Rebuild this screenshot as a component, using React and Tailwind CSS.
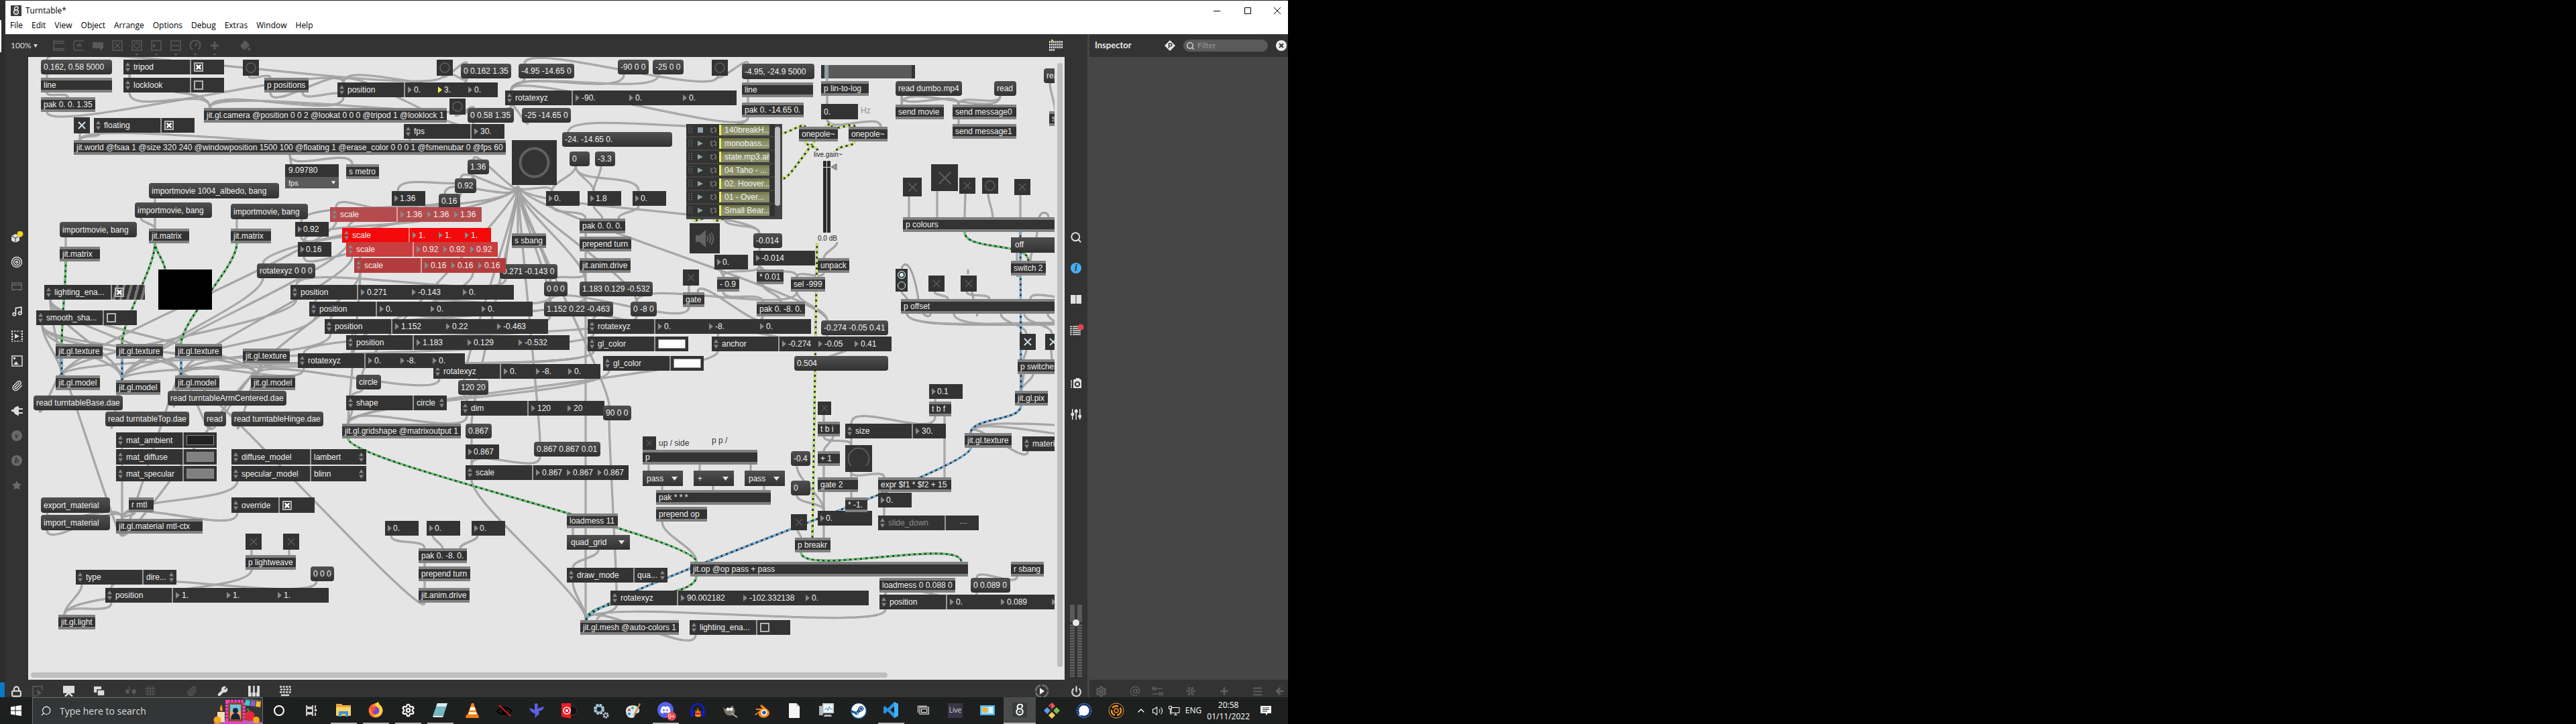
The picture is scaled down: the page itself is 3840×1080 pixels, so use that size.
import React from "react";
import {
  Music, Paperclip, Search, Star, Target, Wrench, Settings, Power,
  Lock, Snowflake, AtSign, Plus, Menu, ArrowLeft, ChevronUp, Volume2, PaintBucket,
} from "lucide-react";
import { FaDiscord, FaSteam } from "react-icons/fa";

const OX = 42;
const OY = 85;
const at = (x, y, w, h) => ({ left: x - OX, top: y - OY, width: w, height: h });

/* ---------- patch cords: [x1, y1, x2, y2] ---------- */
const gray = [
  [70, 111, 70, 116], [70, 138, 101, 145], [70, 167, 512, 123], [193, 111, 193, 116], [193, 111, 313, 161], [193, 138, 313, 161],
  [371, 113, 403, 116], [403, 138, 512, 123], [451, 138, 512, 145], [512, 145, 313, 161], [660, 113, 696, 95],
  [679, 171, 706, 161], [696, 117, 512, 123], [706, 183, 512, 123], [119, 199, 119, 209], [149, 198, 119, 209],
  [611, 207, 119, 209], [432, 231, 434, 245], [432, 231, 525, 245], [231, 296, 231, 341], [210, 325, 231, 341],
  [353, 327, 353, 341], [98, 354, 98, 368], [660, 113, 70, 89], [696, 117, 660, 108],
  [772, 277, 706, 238], [772, 277, 687, 266], [772, 277, 663, 289], [772, 277, 772, 348], [772, 277, 754, 394],
  [772, 277, 820, 420], [772, 277, 820, 450], [772, 277, 873, 420], [772, 277, 949, 450], [772, 277, 1132, 348],
  [772, 277, 692, 567], [772, 277, 703, 632], [772, 277, 805, 659], [772, 277, 908, 605], [772, 277, 540, 559],
  [772, 277, 1233, 478], [772, 277, 392, 393], [772, 277, 823, 285], [772, 277, 519, 340],
  [706, 260, 593, 285], [687, 288, 449, 331], [663, 311, 453, 361], [593, 307, 501, 309], [449, 353, 525, 361], [453, 383, 537, 385],
  [75, 447, 92, 560], [75, 447, 182, 567], [75, 447, 270, 560], [75, 447, 383, 560],
  [63, 485, 92, 560], [63, 485, 182, 567], [63, 485, 270, 560], [63, 485, 383, 560],
  [501, 331, 92, 560], [519, 362, 182, 567], [525, 383, 270, 560], [537, 407, 383, 560],
  [442, 447, 92, 560], [470, 472, 182, 567], [493, 498, 270, 560], [525, 522, 383, 560],
  [453, 549, 270, 560], [655, 565, 383, 560], [392, 415, 182, 567], [885, 498, 92, 560], [885, 524, 182, 567], [885, 524, 270, 560],
  [754, 416, 442, 425], [820, 442, 470, 450], [820, 472, 493, 476], [873, 442, 525, 500], [873, 407, 820, 420], [949, 472, 885, 476],
  [949, 472, 453, 527], [59, 612, 92, 560], [166, 636, 182, 567], [259, 605, 270, 560], [313, 636, 383, 560], [354, 636, 383, 560],
  [313, 636, 270, 560], [182, 668, 182, 774], [354, 717, 182, 774], [354, 765, 182, 774], [201, 764, 182, 774], [70, 764, 182, 774],
  [70, 790, 182, 774], [182, 796, 92, 560], [182, 796, 270, 560], [182, 796, 383, 560], [633, 899, 270, 560],
  [537, 407, 519, 632], [705, 407, 525, 522], [540, 581, 525, 590], [525, 612, 519, 632], [692, 589, 696, 598], [696, 620, 519, 632],
  [908, 553, 519, 632], [1070, 524, 519, 632], [703, 654, 703, 663], [703, 685, 703, 694], [703, 716, 874, 925], [805, 681, 703, 694],
  [873, 407, 873, 925], [908, 627, 919, 881], [919, 903, 890, 925], [858, 248, 823, 285], [858, 248, 885, 285], [858, 248, 952, 285],
  [896, 248, 885, 285], [823, 307, 873, 326], [885, 307, 898, 326], [952, 307, 922, 326], [873, 348, 873, 353], [873, 375, 873, 385],
  [930, 111, 762, 135], [982, 111, 762, 135], [782, 117, 762, 135], [787, 183, 762, 157], [1070, 113, 1115, 95], [1070, 113, 782, 95],
  [1115, 117, 1115, 123], [1115, 145, 1115, 153], [1115, 175, 847, 197], [1115, 175, 762, 135], [762, 157, 313, 161],
  [1233, 117, 1233, 121], [1233, 143, 1233, 155], [1233, 178, 1240, 189], [1233, 178, 1313, 189],
  [1344, 143, 1344, 156], [1344, 143, 1429, 156], [1491, 143, 1344, 156], [1491, 143, 1429, 156], [1429, 178, 1429, 185],
  [1565, 124, 1573, 166], [1132, 370, 1132, 374], [1132, 396, 1137, 402], [1248, 361, 1228, 385], [1228, 407, 1188, 413],
  [1132, 396, 1188, 413], [1132, 396, 1078, 413], [1074, 402, 1078, 413], [1080, 326, 1132, 348], [1027, 426, 1027, 436], [1027, 458, 820, 450],
  [1137, 424, 1164, 450], [1078, 435, 1137, 450], [1188, 435, 949, 450], [1137, 472, 1133, 480], [1188, 435, 1233, 478],
  [1137, 472, 1040, 436], [1233, 500, 1070, 502], [1193, 531, 1316, 520],
  [1355, 293, 1355, 324], [1397, 285, 1397, 324], [1439, 289, 1438, 324], [1473, 289, 1480, 324], [1521, 291, 1521, 324],
  [1546, 346, 1536, 389], [1516, 377, 1516, 389], [1516, 411, 1530, 408], [1344, 435, 1352, 446], [1393, 435, 1413, 446], [1441, 435, 1475, 446],
  [1600, 438, 1536, 446], [1352, 468, 1700, 500], [1422, 468, 1700, 500], [1352, 468, 1700, 496], [1492, 468, 1530, 498], [1527, 468, 1568, 498],
  [1562, 468, 1600, 498], [1530, 522, 1526, 536], [1567, 522, 1568, 536], [1526, 558, 1522, 583], [1540, 558, 1522, 583], [1522, 558, 1522, 583],
  [1700, 622, 1447, 646], [1700, 648, 1447, 646], [1532, 673, 1447, 646], [1228, 619, 1228, 629], [1228, 651, 1269, 664], [1242, 651, 1228, 673],
  [1228, 695, 1228, 712], [1269, 704, 1269, 712], [1269, 654, 1269, 664], [1394, 595, 1394, 599],
  [1394, 621, 1269, 632], [1408, 621, 1408, 712], [1228, 734, 1228, 802], [1269, 734, 1269, 742], [1318, 757, 1318, 769],
  [1269, 704, 1318, 712], [1188, 695, 1228, 762], [1188, 739, 1228, 762], [1189, 791, 1194, 802], [1516, 860, 1456, 862], [1456, 884, 1320, 887],
  [1320, 884, 1320, 887], [1320, 909, 874, 925], [987, 778, 1038, 838], [967, 693, 967, 702], [1043, 693, 1043, 702], [1119, 693, 1119, 702],
  [987, 725, 987, 731], [1063, 725, 1063, 731], [1139, 725, 1139, 731], [854, 788, 854, 798], [892, 820, 854, 847], [854, 869, 874, 925],
  [1037, 947, 874, 925], [583, 799, 633, 818], [645, 799, 660, 818], [712, 799, 686, 818], [633, 840, 633, 845], [633, 867, 633, 877],
  [375, 820, 375, 828], [431, 820, 431, 828], [375, 850, 96, 917], [472, 867, 166, 877], [122, 872, 96, 917], [166, 899, 96, 917],
];
const green = [
  [98, 390, 92, 513], [231, 363, 182, 513], [231, 363, 246, 402], [353, 363, 270, 513], [1438, 346, 1533, 389],
  [519, 654, 1038, 838], [1194, 824, 1433, 838], [1038, 860, 874, 925],
];
const blue = [
  [92, 535, 92, 560], [182, 535, 182, 567], [270, 535, 270, 560], [1521, 346, 1522, 583], [1522, 605, 1447, 646], [1447, 668, 874, 925],
];
const signal = [
  [1166, 196, 1200, 189], [1166, 262, 1240, 189], [1245, 188, 1274, 189], [1200, 211, 1219, 225], [1274, 211, 1247, 225],
  [1033, 327, 1057, 327], [1064, 327, 1096, 324], [1218, 362, 1211, 802],
];
const cord = ([a, b, c, d]) => {
  const k = Math.min(36, Math.max(3, Math.hypot(c - a, d - b) * 0.28));
  return `M${a},${b}C${a},${b + k} ${c},${d - k} ${c},${d}`;
};

function Cords() {
  const dashed = [[green, "#62cf70"], [blue, "#6fb4ec"], [signal, "#cdf06e"]];
  return (
    <svg className="absolute inset-0 h-full w-full" fill="none" aria-hidden="true">
      <g transform={`translate(${-OX} ${-OY})`}>
        {gray.map((c, i) => (
          <g key={i}>
            <path d={cord(c)} stroke="#929292" strokeWidth="3" />
            <path d={cord(c)} stroke="#b3b3b3" strokeWidth="1.4" />
          </g>
        ))}
        <path d="M1344,401C1348,388 1360,390 1369,446M1549,324C1552,315 1562,315 1563,324M1387,468C1387,474 1380,472 1376,468M1443,409L1443,402M1449,435L1451,446M1457,468L1456,472" stroke="#a0a0a0" strokeWidth="3" />
        {dashed.map(([list, color]) =>
          list.map((c, i) => (
            <g key={color + i}>
              <path d={cord(c)} stroke="#2f3a30" strokeWidth="3" />
              <path d={cord(c)} stroke={color} strokeWidth="3" strokeDasharray="5 3" />
            </g>
          ))
        )}
      </g>
    </svg>
  );
}

/* ---------- patcher boxes ---------- */
const portFill = { h: "#f0937f", c: "#7fd4e8", o: "#d6d84a" };
function Port({ side, dx, kind }) {
  const top = side === "in";
  return (
    <svg width="8" height="4" viewBox="0 0 8 4" className={top ? "absolute top-0" : "absolute bottom-0"} style={{ left: dx - 4 }} aria-hidden="true">
      {kind === "x" ? (
        <path d={top ? "M0 0h8C8 3 6 4 4 4S0 3 0 0z" : "M0 4h8C8 1 6 0 4 0S0 1 0 4z"} fill="#c8c8c8" />
      ) : (
        <path d={top ? "M1 0C1 2.500 2.500 3.300 4 3.300S7 2.500 7 0" : "M1 4C1 1.500 2.500 .7 4 .7S7 1.500 7 4"} fill="#2a2a2a" stroke={portFill[kind]} />
      )}
    </svg>
  );
}
const port = (s) => ({ kind: s[0], dx: Number(s.slice(1)) });

function Obj({ d: [x, y, w, text, ins = "h9", outs = "o9"] }) {
  return (
    <div className="absolute overflow-hidden border-y-4 border-[#808080] bg-[#333] pl-1 text-xs leading-[14px] whitespace-nowrap" style={at(x, y, w, 22)}>
      {text}
      <div className="absolute inset-x-0 -top-1 h-1">
        {ins.split(" ").filter(Boolean).map((s) => <Port key={s} side="in" {...port(s)} />)}
      </div>
      <div className="absolute inset-x-0 -bottom-1 h-1">
        {outs.split(" ").filter(Boolean).map((s) => <Port key={s} side="out" {...port(s)} />)}
      </div>
    </div>
  );
}
const Msg = ({ d: [x, y, w, text, h = 22] }) => (
  <button className="absolute overflow-hidden rounded-[4px] bg-linear-to-b from-[#505050] to-[#323232] pl-1 text-left text-xs whitespace-nowrap" style={at(x, y, w, h)}>{text}</button>
);
const Tri = ({ color = "#8a8a8a" }) => (
  <svg width="6" height="12" viewBox="0 0 6 12" className="shrink-0" aria-hidden="true"><path d="M0 1L6 6L0 11z" fill={color} /></svg>
);
const UpDown = () => (
  <svg width="7" height="14" viewBox="0 0 7 14" className="shrink-0" aria-hidden="true"><path d="M0 5.500L3.500 0L7 5.500zM0 8.500L3.500 14L7 8.500z" fill="#868686" /></svg>
);
const Num = ({ d: [x, y, w, v] }) => (
  <label className="absolute flex items-center gap-0.5 bg-[#333] pl-1" style={at(x, y, w, 22)}>
    <Tri />
    <input aria-label="number" defaultValue={v} className="w-full min-w-0 bg-transparent text-xs outline-none" />
  </label>
);
function Cross({ size, color, w = 2 }) {
  return (
    <svg width={size} height={size} viewBox="0 0 12 12" aria-hidden="true" className="pointer-events-none col-start-1 row-start-1">
      <path d="M1 1L11 11M11 1L1 11" stroke={color} strokeWidth={w} />
    </svg>
  );
}
const Toggle = ({ d: [x, y, s, on] }) => (
  <label className="absolute grid place-items-center bg-[#333]" style={at(x, y, s, s)}>
    <input type="checkbox" aria-label="toggle" defaultChecked={!!on} className="col-start-1 row-start-1 h-full w-full appearance-none" />
    <Cross size={Math.round(s * 0.52)} color={on ? "#cfe9ee" : "#5c5c5c"} w={on ? 1.8 : 1.4} />
  </label>
);
const Bang = ({ d: [x, y, s, r, sw] }) => (
  <button aria-label="bang" className="absolute bg-[#333]" style={at(x, y, s, s)}>
    <svg width={s} height={s} viewBox={`0 0 ${s} ${s}`}><circle cx={s / 2} cy={s / 2} r={r} fill="none" stroke="#606060" strokeWidth={sw} /></svg>
  </button>
);
const CheckBox = ({ on, label }) => (
  <span className="grid place-items-center">
    <input type="checkbox" aria-label={label} defaultChecked={on} className="col-start-1 row-start-1 h-3.5 w-3.5 appearance-none border-2 border-[#b4b4b4]" />
    {on && <Cross size={8} color="#fff" w={4} />}
  </span>
);
function Attr({ x, y, w = 150, h = 22, label, div = 99, bg = "#333", nums, step, yellow, check, color, menu, stripes, dim }) {
  return (
    <div className="absolute flex overflow-hidden text-xs whitespace-nowrap" style={{ ...at(x, y, w, h), background: bg }}>
      <div className="flex shrink-0 items-center gap-[5px] pl-[3px]" style={{ width: div }}>
        <UpDown />
        <span className={dim ? "text-[#8c8c8c]" : ""}>{label}</span>
      </div>
      <div className="w-0.5 shrink-0 bg-white/50" />
      {nums && nums.map((n, i) => (
        <label key={i} className="flex shrink-0 items-center gap-[3px] pl-1" style={{ width: step }}>
          <Tri color={yellow === i ? "#f2ee4c" : "#8a8a8a"} />
          <input aria-label={`${label} ${i + 1}`} defaultValue={n} className="w-full min-w-0 bg-transparent outline-none" />
        </label>
      ))}
      {check !== undefined && (
        <div className={stripes ? "flex flex-1 items-center bg-[repeating-linear-gradient(105deg,#333_0px,#333_6px,#777_6px,#777_10px)] pl-1" : "flex flex-1 items-center pl-1"}>
          <CheckBox on={check} label={label} />
        </div>
      )}
      {color && <button aria-label={`${label} colour`} className="m-1 w-[42px] border border-[#8c8c8c]" style={{ background: color }} />}
      {menu && (
        <label className="flex flex-1 items-center pr-1 pl-1">
          <select aria-label={label} className="w-full min-w-0 appearance-none bg-transparent outline-none"><option>{menu}</option></select>
          <UpDown />
        </label>
      )}
      {dim && <span className="flex-1 self-center pl-5 text-[#8c8c8c]">---</span>}
    </div>
  );
}
const UMenu = ({ d: [x, y, w, v, h = 23] }) => (
  <label className="absolute flex items-center bg-linear-to-b from-[#505050] to-[#323232] px-1.5" style={at(x, y, w, h)}>
    <select aria-label="menu" className="w-full min-w-0 appearance-none bg-transparent text-xs outline-none"><option>{v}</option></select>
    <svg width="9" height="6" className="mr-0.5 shrink-0" aria-hidden="true"><path d="M0 0h9L4.500 6z" fill="#e5e5e5" /></svg>
  </label>
);

const messages = [
  [61, 89, 106, "0.162, 0.58 5000"], [222, 273, 194, "importmovie 1004_albedo, bang", 23], [201, 302, 115, "importmovie, bang", 23],
  [344, 304, 115, "importmovie, bang", 23], [89, 331, 115, "importmovie, bang", 23], [687, 95, 75, "0 0.162 1.35"],
  [773, 95, 83, "-4.95 -14.65 0"], [697, 161, 69, "0 0.58 1.35"], [778, 161, 73, "-25 -14.65 0"], [697, 238, 32, "1.36"],
  [678, 266, 32, "0.92"], [654, 289, 32, "0.16"], [745, 394, 86, "0.271 -0.143 0"], [383, 393, 87, "rotatexyz 0 0 0"],
  [921, 89, 46, "-90 0 0"], [973, 89, 46, "-25 0 0"], [1106, 95, 108, "-4.95, -24.9 5000", 23], [838, 197, 164, "-24. -14.65 0."],
  [849, 226, 30, "0"], [887, 226, 30, "-3.3"], [1123, 348, 43, "-0.014"], [1335, 121, 99, "read dumbo.mp4"], [1482, 121, 33, "read"],
  [1556, 102, 33, "read"], [50, 590, 133, "read turntableBase.dae"], [250, 583, 177, "read turntableArmCentered.dae"],
  [157, 614, 125, "read turntableTop.dae"], [304, 614, 33, "read"], [345, 614, 137, "read turntableHinge.dae"], [531, 559, 37, "circle"],
  [694, 632, 39, "0.867"], [796, 659, 99, "0.867 0.867 0.01"], [811, 420, 35, "0 0 0"],
  [864, 420, 109, "1.183 0.129 -0.532"], [811, 450, 103, "1.152 0.22 -0.463"], [940, 450, 39, "0 -8 0"], [1224, 478, 100, "-0.274 -0.05 0.41"],
  [1184, 531, 140, "0.504"], [1179, 673, 29, "-0.4"], [1179, 717, 29, "0"], [61, 742, 103, "export_material", 23],
  [61, 768, 103, "import_material", 23], [463, 845, 35, "0 0 0"], [1447, 862, 59, "0 0.089 0"],
];
const objects = [
  [61, 116, 106, "line", "h9 x53 x96", "o9 x96"], [61, 145, 81, "pak 0. 0. 1.35", "x9 h40 x71"], [394, 116, 66, "p positions", "h9", "o9 o57"],
  [304, 161, 362, "jit.gl.camera @position 0 0 2 @lookat 0 0 0 @tripod 1 @looklock 1", "c9", "x9 x352"],
  [110, 209, 644, "jit.world @fsaa 1 @size 320 240 @windowposition 1500 100 @floating 1 @erase_color 0 0 0 1 @fsmenubar 0 @fps 60", "h9", "x9 o322 x634"],
  [222, 341, 60, "jit.matrix", "h9", "o9 x50"], [344, 341, 60, "jit.matrix", "h9", "o9 x50"], [89, 368, 60, "jit.matrix", "h9", "o9 x50"],
  [516, 245, 49, "s metro", "h9", ""], [763, 348, 51, "s sbang", "h9", ""], [1106, 123, 106, "line", "h9 x53 x96", "o9 x96"],
  [1106, 153, 92, "pak 0. -14.65 0.", "h9 x46 x82"], [864, 326, 68, "pak 0. 0. 0.", "h9 h34 h58"], [864, 353, 77, "prepend turn"],
  [864, 385, 76, "jit.anim.drive", "h9", "o9 x66"], [1128, 402, 40, "* 0.01", "h9 c31"], [1224, 121, 71, "p lin-to-log"],
  [1191, 189, 58, "onepole~", "h9 h48"], [1265, 189, 58, "onepole~", "h9 h48"], [1335, 156, 72, "send movie", "h9", ""],
  [1420, 156, 95, "send message0", "h9", ""], [1420, 185, 95, "send message1", "h9", ""], [1564, 166, 40, "s", "h9", ""],
  [1346, 324, 240, "p colours", "h9 h51 h92 h134 h175 h217", "x9 o92 o175"], [1507, 389, 52, "switch 2", "c9 h26 x42"],
  [1219, 385, 47, "unpack", "h9", "o9 x37"], [83, 513, 70, "jit.gl.texture", "h9", "o9 x60"], [173, 513, 70, "jit.gl.texture", "h9", "o9 x60"],
  [261, 513, 70, "jit.gl.texture", "h9", "o9 x60"], [362, 520, 70, "jit.gl.texture", "x9", "o9 x60"], [83, 560, 66, "jit.gl.model", "c9", "x9 x56"],
  [173, 567, 66, "jit.gl.model", "c9", "x9 x56"], [261, 560, 66, "jit.gl.model", "c9", "x9 x56"], [374, 560, 66, "jit.gl.model", "c9", "x9 x56"],
  [510, 632, 177, "jit.gl.gridshape @matrixoutput 1", "c9", "o9 x167"], [1018, 436, 32, "gate", "c9 h22"], [1069, 413, 33, "- 0.9", "h9 c23"],
  [1179, 413, 51, "sel -999", "h9 x41", "o9 x41"], [1128, 450, 72, "pak 0. -8. 0.", "h9 x36 x62"], [958, 671, 171, "p", "h9", "o9 o85 o161"],
  [1343, 446, 260, "p offset", "h9 h70 h132 h193", "o9 o44 o79 o114 o149 o184 o219"], [1517, 536, 90, "p switches", "h9 h51"],
  [1513, 583, 49, "jit.gl.pix", "h9", "o9 x39"], [1385, 599, 33, "t b f", "h9", "o9 o23"], [1219, 629, 33, "t b i", "h9", "o9 o23"],
  [1219, 673, 33, "+ 1", "h9 x23"], [1438, 646, 70, "jit.gl.texture", "h9", "o9 x60"], [192, 742, 37, "r mtl", "", "o9"],
  [173, 774, 129, "jit.gl.material mtl-ctx", "c9 x25 x41 x56 x72 x88 x103 x119", "o9 x119"], [366, 828, 75, "p lightweave", "h9 h65"],
  [87, 917, 55, "jit.gl.light", "c9", "x9"], [624, 818, 72, "pak 0. -8. 0.", "h9 h36 h62"], [624, 845, 77, "prepend turn"],
  [624, 877, 76, "jit.anim.drive", "h9", "o9 x66"], [845, 766, 76, "loadmess 11", "x9"],
  [865, 925, 147, "jit.gl.mesh @auto-colors 1", "c9 c25 x41 x57 x73 x89 x105 x121 x137", "x9 x137"], [978, 731, 171, "pak * * *", "h9 h85 h161"],
  [978, 756, 76, "prepend op"], [1029, 838, 414, "jit.op @op pass + pass", "h9 c404", "o9 x404"], [1219, 712, 60, "gate 2", "c9 h50", "o9 o50"],
  [1185, 802, 53, "p breakr", "h9 h26 h43"], [1309, 712, 109, "expr $f1 * $f2 + 15", "h9 c99"],
  [1507, 838, 49, "r sbang", "", "o9"], [1311, 862, 113, "loadmess 0 0.088 0", "x9"],
];
const numbers = [
  [440, 331, 50, "0.92"], [584, 285, 50, "1.36"], [444, 361, 50, "0.16"], [814, 285, 50, "0."], [876, 285, 50, "1.8"], [943, 285, 50, "0."],
  [1065, 380, 50, "0."], [1123, 374, 92, "-0.014"], [694, 663, 50, "0.867"], [1385, 573, 50, "0.1"], [574, 777, 50, "0."], [636, 777, 50, "0."],
  [703, 777, 50, "0."], [1219, 762, 81, "0."], [1309, 735, 50, "0."],
];
const toggles = [
  [110, 175, 24, 1], [1018, 402, 24], [1346, 265, 28], [1388, 245, 40], [1430, 265, 24], [1512, 267, 24], [958, 651, 20], [1384, 411, 24],
  [1432, 411, 24], [1520, 498, 24, 1], [1558, 498, 24, 1], [1219, 599, 20], [366, 796, 24], [422, 796, 24], [1179, 767, 24],
];
const bangs = [
  [362, 89, 24, 7, 1.5], [651, 89, 24, 7, 1.5], [670, 147, 24, 7, 1.5], [1061, 89, 24, 7, 1.5], [1464, 265, 24, 7, 1.5], [763, 209, 67, 21, 4],
];
const zeros = ["0.", "0.", "0."];
const attrs = [
  { x: 184, y: 89, label: "tripod", check: true }, { x: 184, y: 116, label: "locklook", check: false },
  { x: 140, y: 176, label: "floating", check: true }, { x: 503, y: 123, w: 239, label: "position", nums: ["0.", "3.", "0."], step: 45, yellow: 1 },
  { x: 753, y: 135, w: 345, label: "rotatexyz", nums: ["-90.", "0.", "0."], step: 80 }, { x: 602, y: 185, label: "fps", nums: ["30."], step: 45 },
  { x: 492, y: 309, w: 226, label: "scale", nums: ["1.36", "1.36", "1.36"], step: 40, bg: "#b44c4d" },
  { x: 510, y: 340, w: 222, label: "scale", nums: ["1.", "1.", "1."], step: 39, bg: "#f40a0a" },
  { x: 516, y: 361, w: 226, label: "scale", nums: ["0.92", "0.92", "0.92"], step: 40, bg: "#c83d3d" },
  { x: 528, y: 385, w: 226, label: "scale", nums: ["0.16", "0.16", "0.16"], step: 40, bg: "#b23d3d" },
  { x: 66, y: 425, label: "lighting_ena...", check: true, stripes: true }, { x: 54, y: 463, label: "smooth_sha...", check: false },
  { x: 173, y: 645, h: 23, label: "mat_ambient", color: "#222" }, { x: 173, y: 670, h: 23, label: "mat_diffuse", color: "#808080" },
  { x: 173, y: 695, h: 23, label: "mat_specular", color: "#808080" },
  { x: 345, y: 670, w: 201, h: 23, label: "diffuse_model", div: 117, menu: "lambert" },
  { x: 345, y: 695, w: 201, h: 23, label: "specular_model", div: 117, menu: "blinn" },
  { x: 433, y: 425, w: 333, label: "position", nums: ["0.271", "-0.143", "0."], step: 76 }, { x: 461, y: 450, w: 333, label: "position", nums: zeros, step: 76 },
  { x: 484, y: 476, w: 333, label: "position", nums: ["1.152", "0.22", "-0.463"], step: 76 },
  { x: 516, y: 500, w: 333, label: "position", nums: ["1.183", "0.129", "-0.532"], step: 76 },
  { x: 646, y: 543, w: 249, label: "rotatexyz", nums: ["0.", "-8.", "0."], step: 48 },
  { x: 444, y: 527, w: 249, label: "rotatexyz", nums: ["0.", "-8.", "0."], step: 48 },
  { x: 516, y: 590, label: "shape", menu: "circle" }, { x: 687, y: 598, w: 214, label: "dim", nums: ["120", "20"], step: 54 },
  { x: 694, y: 694, w: 243, label: "scale", nums: ["0.867", "0.867", "0.867"], step: 46 },
  { x: 876, y: 476, w: 333, label: "rotatexyz", nums: ["0.", "-8.", "0."], step: 76 }, { x: 876, y: 502, label: "gl_color", color: "#fff" },
  { x: 899, y: 531, label: "gl_color", color: "#fff" }, { x: 1061, y: 502, w: 268, label: "anchor", nums: ["-0.274", "-0.05", "0.41"], step: 54 },
  { x: 1260, y: 632, label: "size", nums: ["30."], step: 45 }, { x: 1524, y: 651, label: "material", check: false },
  { x: 345, y: 742, w: 124, h: 23, label: "override", div: 70, check: true }, { x: 113, y: 850, label: "type", menu: "dire..." },
  { x: 157, y: 877, w: 333, label: "position", nums: ["1.", "1.", "1."], step: 76 }, { x: 845, y: 847, label: "draw_mode", menu: "qua..." },
  { x: 910, y: 881, w: 385, label: "rotatexyz", nums: ["90.002182", "-102.332138", "0."], step: 93 },
  { x: 1028, y: 925, label: "lighting_ena...", check: false }, { x: 1309, y: 769, label: "slide_down", dim: true },
  { x: 1311, y: 887, w: 333, label: "position", nums: ["0.", "0.089", "0."], step: 76 },
];
const menus = [[958, 702, 60, "pass"], [1034, 702, 60, "+"], [1110, 702, 60, "pass"], [845, 798, 94, "quad_grid", 22]];
const clips = ["140breakH...", "monobass....", "state.mp3.aif", "04 Taho - ...", "02. Hoover...", "01 - Over...", "Small Bear..."];

function Playlist() {
  return (
    <div className="absolute flex bg-[#444]" style={at(1023, 185, 143, 142)}>
      <ul className="flex flex-1 flex-col gap-0.5 overflow-hidden">
        {clips.map((c, i) => (
          <li key={c} className="flex h-[18px] shrink-0 items-center bg-[#333] pl-[3px]">
            <svg width="6" height="12" className="shrink-0" aria-hidden="true"><path d="M1 0v12M5 0v12" stroke="#6c6c6c" strokeWidth="1.5" strokeDasharray="1.5 1.5" /></svg>
            <button aria-label={i ? "play" : "stop"} className="ml-2 shrink-0">
              <svg width="9" height="10">{i ? <path d="M0 1L8 5L0 9z" fill="#8fa3a8" /> : <path d="M0 1h8v8H0z" fill="#8fa3a8" />}</svg>
            </button>
            <button aria-label="loop" className="ml-2.5 shrink-0">
              <svg width="9" height="10" fill="none" stroke="#808080" strokeWidth="1.5"><path d="M4 9A4 4 0 0 1 1.500 2.500M5 1A4 4 0 0 1 7.500 7.500" /><path d="M0 2h3v2M9 8H6V6" strokeWidth="1" /></svg>
            </button>
            <span className="ml-1 h-4 w-[75px] shrink-0 overflow-hidden border-l-[3px] border-[#f0ee55] bg-linear-to-b from-[#6f7346] to-[#8b9169] to-40% pl-[5px] text-xs leading-4 whitespace-nowrap">{c}</span>
          </li>
        ))}
      </ul>
      <div className="mt-1 mr-[3px] h-[118px] w-2 rounded bg-[#bebebe]" />
    </div>
  );
}

function Patcher() {
  return (
    <main className="relative min-w-0 flex-1 overflow-hidden bg-[#e5e5e5]">
      <div className="absolute inset-y-0 right-[15px] left-0 overflow-hidden text-[#f0f0f0]">
        <Cords />
        {toggles.map((d, i) => <Toggle key={i} d={d} />)}
        {bangs.map((d, i) => <Bang key={i} d={d} />)}
        {messages.map((d, i) => <Msg key={i} d={d} />)}
        {objects.map((d, i) => <Obj key={i} d={d} />)}
        {numbers.map((d, i) => <Num key={i} d={d} />)}
        {attrs.map((a, i) => <Attr key={i} {...a} />)}
        {menus.map((d, i) => <UMenu key={i} d={d} />)}
        <Msg d={[683, 567, 45, "120 20"]} />
        <Msg d={[899, 605, 42, "90 0 0"]} />
        <Obj d={[1260, 742, 33, "* -1.", "h9 x23", "x9"]} />

        <div className="absolute flex flex-col text-xs" style={at(425, 245, 80, 36)}>
          <output className="flex-1 bg-[#333] pl-[5px] leading-[18px]">9.09780</output>
          <label className="flex h-[17px] items-center bg-[#5a5a5a] px-[5px]">
            <select aria-label="unit" className="w-full appearance-none bg-transparent text-[11px] leading-[16px] outline-none"><option>fps</option></select>
            <svg width="6" height="5" className="shrink-0" aria-hidden="true"><path d="M0 0h6L3 5z" fill="#eee" /></svg>
          </label>
        </div>
        <div className="absolute bg-black" style={at(236, 402, 80, 60)} />
        <Playlist />
        <button aria-label="audio output" className="absolute grid place-items-center bg-[#333]" style={at(1028, 333, 45, 45)}>
          <svg width="28" height="26" viewBox="0 0 28 26"><path d="M0 8h6l9-8v26l-9-8H0z" fill="#636363" /><path d="M17 9q3 4 0 8M20 6q5 7 0 14M23 4q7 9 0 18" fill="none" stroke="#636363" strokeWidth="2" /></svg>
        </button>
        <div className="absolute flex bg-[#333] px-[5px]" style={at(1224, 97, 140, 20)}>
          <div className="w-1.5 bg-[#8d9da1]" /><div className="flex-1 bg-[#595959]" />
        </div>
        <input aria-label="cutoff" defaultValue="0." className="absolute bg-[#333] pl-1 text-xs outline-none" style={at(1224, 155, 55, 23)} />
        <span className="absolute text-xs leading-[22px] text-[#909090]" style={at(1283, 154, 20, 22)}>Hz</span>
        <span className="absolute text-[10px] leading-4 whitespace-nowrap text-[#222]" style={at(1213, 223, 50, 16)}>live.gain~</span>
        <svg className="absolute" style={at(1227, 240, 24, 107)} aria-hidden="true">
          <path d="M0 0h5v107H0zM6 0h5v107H6z" fill="#2a2a2a" /><path d="M0 9.500h12" stroke="#ddd" /><path d="M12 9L20 4.500V13.500z" fill="#999" stroke="#666" />
        </svg>
        <span className="absolute text-[10px] leading-4 whitespace-nowrap text-[#222]" style={at(1219, 348, 40, 16)}>0.0 dB</span>
        <div className="absolute bg-linear-to-b from-[#505050] to-[#323232] pl-1.5 text-xs leading-[23px]" style={at(1507, 354, 90, 23)}>off</div>
        <div className="absolute flex flex-col items-center justify-center gap-1 bg-[#333]" style={at(1335, 401, 18, 34)}>
          <input type="radio" name="mode" aria-label="mode 1" defaultChecked className="h-3 w-3 appearance-none rounded-full border border-[#cfe9ee] bg-[#cfe9ee] shadow-[inset_0_0_0_2px_#333]" />
          <input type="radio" name="mode" aria-label="mode 2" className="h-3 w-3 appearance-none rounded-full border border-[#cfe9ee]" />
        </div>
        <span className="absolute text-xs leading-[20px] whitespace-nowrap text-[#333]" style={at(982, 651, 60, 20)}>up / side</span>
        <span className="absolute text-xs leading-[20px] whitespace-nowrap text-[#333]" style={at(1061, 647, 60, 20)}>p p /</span>
        <button aria-label="dial" className="absolute bg-[#333]" style={at(1260, 664, 40, 40)}>
          <svg width="40" height="40" fill="none" stroke="#666" strokeWidth="1.5"><path d="M9 31A15.500 15.500 0 1 1 31 31" /></svg>
        </button>
      </div>
      <div className="absolute top-[9px] right-[3px] bottom-[19px] w-2 rounded bg-[#bebebe]" />
      <div className="absolute right-[264px] bottom-[3px] left-1 h-2 rounded bg-[#bebebe]" />
    </main>
  );
}

/* ---------- window chrome ---------- */
const ico = { fill: "none", stroke: "currentColor", strokeWidth: 1.5 };
const Drop = () => <path d="M5 20h6L8 23z" fill="currentColor" stroke="none" />;
const toolIcons = [
  ["object", <path d="M0 0v16M0 1.500h16M0 4.500h16M0 12.500h16M0 15h16" />],
  ["message", <><path d="M16 1H4Q1 1 1 4V12Q1 15 4 15H16" /><path d="M6 10l1-4M7 7q2-2 2 0l-.6 3M9 7q2-2 2.500 0l-.6 3" /></>],
  ["comment", <path d="M0 3h16v9h-2v4l-4-4H0z" fill="currentColor" stroke="none" />],
  ["toggle", <path d="M1 1h14v14H1zM4 4l8 8M12 4l-8 8" />],
  ["button", <><path d="M1 1h14v14H1z" /><circle cx="8" cy="8" r="4" /><Drop /></>],
  ["number", <><path d="M1 1h14v14H1z" /><path d="M3 5l5 3-5 3z" fill="currentColor" stroke="none" /><Drop /></>],
  ["slider", <><path d="M1 1h14v14H1zM3 8h10" /><Drop /></>],
  ["dial", <><path d="M4 14A7.500 7.500 0 1 1 12 14M8 9l3-5" strokeWidth="2" /><Drop /></>],
  ["add", <><path d="M8 2v12M2 8h12" strokeWidth="3" /><Drop /></>],
];
const menuItems = ["File", "Edit", "View", "Object", "Arrange", "Options", "Debug", "Extras", "Window", "Help"];
const MaxLogo = ({ s }) => (
  <svg width={s} height={s} viewBox="0 0 16 16" aria-hidden="true">
    <path d="M0 0h16v16H0z" fill="#3b3b3b" /><g fill="none" stroke="#f2f2f2" strokeWidth="1.6"><circle cx="8" cy="10" r="3.4" /><path d="M6 7Q4.500 2 8.500 2T10 6" /></g><circle cx="8" cy="10" r="1" fill="#8fdbe0" />
  </svg>
);

const Letter = ({ c }) => <span className="grid h-4 w-4 place-items-center rounded-full bg-[#6a6a6a] font-['Liberation_Serif',serif] text-[13px] leading-none font-bold text-[#333] italic">{c}</span>;
const sideLeft = [
  ["packages", <svg width="20" height="18" viewBox="0 0 20 18"><path d="M8 4l6 3v7l-6 3-6-3V7z" fill="#dcdcdc" /><path d="M2 7l6 3 6-3M8 10v7" stroke="#333" fill="none" /><circle cx="15" cy="4" r="4.5" fill="#f0cf1d" /></svg>],
  ["target", <Target size={18} strokeWidth={2} />],
  ["device", <svg width="16" height="13" className="text-[#6a6a6a]" {...ico}><path d="M1 1h14v10H1zM1 4h14M3 11v2M13 11v2" /></svg>],
  ["music", <Music size={17} strokeWidth={2.5} />],
  ["video", <svg width="17" height="17" {...ico}><path d="M1 0v17M16 0v17" strokeWidth="2.5" strokeDasharray="2.5 1.5" /><path d="M5 5l7 3.500L5 12z" fill="currentColor" stroke="none" /><path d="M4 1h9M4 16h9" strokeDasharray="2.5 1.5" /></svg>],
  ["image", <svg width="17" height="17" {...ico}><path d="M1 1h15v15H1z" /><path d="M3 14l4-5 4 5z" fill="currentColor" stroke="none" /><circle cx="4.5" cy="4.5" r="1" fill="currentColor" /></svg>],
  ["clip", <Paperclip size={17} strokeWidth={2} />],
  ["plugin", <svg width="17" height="17" fill="currentColor"><path d="M0 7h3Q5 2 11 2v3h6v2h-6v4h6v2h-6v3Q5 15 3 10H0z" /></svg>],
  ["vizzie", <Letter c="v" />], ["beap", <Letter c="b" />], ["favourites", <Star size={16} fill="#6a6a6a" stroke="none" />],
];
const sideRight = [
  ["search", <Search size={18} strokeWidth={2.5} />],
  ["inspector", <span className="grid h-4 w-4 place-items-center rounded-full bg-[#46aef0] font-['Liberation_Serif',serif] text-sm leading-none font-bold text-[#333] italic">i</span>],
  ["reference", <svg width="16" height="13" fill="currentColor"><path d="M0 0h7.500v13H0zM8.500 0H16v13H8.500z" /></svg>],
  ["console", <svg width="22" height="18" className="ml-1" stroke="currentColor" strokeWidth="1.5"><path d="M0 4h3M4 4h12M0 7h3M4 7h12M0 10h3M4 10h12M0 13h3M4 13h12M0 16h3M4 16h12" /><circle cx="16" cy="5" r="4.5" fill="#dd4452" stroke="none" /></svg>],
  ["", null],
  ["snapshots", <svg width="17" height="16" fill="currentColor"><path d="M4 2h3l1-2h5l1 2h2v13H4z" /><path d="M1 3v12" stroke="currentColor" strokeWidth="2" strokeDasharray="1.5 1" /><circle cx="10" cy="9" r="3.2" stroke="#333" strokeWidth="2" /></svg>],
  ["mixer", <svg width="16" height="16" fill="currentColor"><path d="M2 0h1.500v16H2zM7.500 0H9v16H7.500zM13 0h1.500v16H13z" /><circle cx="2.8" cy="8" r="2.5" /><circle cx="8.3" cy="3.5" r="2.5" /><circle cx="13.7" cy="11" r="2.5" /></svg>],
];
const IconButton = ({ label, className, children }) => <button aria-label={label} className={className}>{children}</button>;

function MaxWindow() {
  return (
    <section className="flex min-w-0 flex-1 flex-col bg-[#333]">
      <header className="flex h-[51px] shrink-0 flex-col border-t border-[#222] bg-white font-['Open_Sans',sans-serif] text-xs text-black">
        <div className="flex h-[29px] items-center gap-1.5 pl-2">
          <MaxLogo s={16} />
          <h1 className="flex-1">Turntable*</h1>
          <div className="flex h-full">
            <IconButton label="minimise" className="grid h-full w-9 place-items-center"><svg width="10" height="10" stroke="#000"><path d="M0 5.500h10" /></svg></IconButton>
            <IconButton label="maximise" className="grid h-full w-14 place-items-center"><svg width="10" height="10" stroke="#000" fill="none"><path d="M.5 .5h9v9h-9z" /></svg></IconButton>
            <IconButton label="close" className="grid h-full w-8 place-items-center"><svg width="10" height="10" stroke="#000"><path d="M0 0L10 10M10 0L0 10" /></svg></IconButton>
          </div>
        </div>
        <nav className="flex items-center gap-[13px] pl-[7px]">
          {menuItems.map((m) => <button key={m}>{m}</button>)}
        </nav>
      </header>
      <div className="flex min-h-0 flex-1">
        <div className="flex min-w-0 flex-1 flex-col">
          <div className="flex h-[34px] shrink-0 items-center">
            <select aria-label="zoom" className="ml-2 w-8 appearance-none font-['Lato',sans-serif] text-xs text-[#ddd]"><option>100%</option></select>
            <svg width="6" height="5" className="ml-0.5" aria-hidden="true"><path d="M0 0h6L3 5z" fill="#ddd" /></svg>
            <div className="ml-6 flex gap-[13px] text-[#595959]">
              {toolIcons.map(([n, g]) => <IconButton key={n} label={n}><svg width="16" height="16" overflow="visible" {...ico}>{g}</svg></IconButton>)}
            </div>
            <IconButton label="fill" className="ml-[30px] text-[#595959]"><PaintBucket size={16} fill="#595959" /></IconButton>
            <div className="flex-1" />
            <IconButton label="calendar" className="mr-[37px]">
              <svg width="20" height="18"><path d="M0 3.500h20M0 7.500h20M0 11.500h20M0 15.500h9" stroke="#ddd" strokeWidth="3" strokeDasharray="2 1" /><path d="M3 0h3v3H3z" fill="#e7d02c" /></svg>
            </IconButton>
          </div>
          <div className="flex min-h-0 flex-1">
            <nav className="flex w-[34px] shrink-0 flex-col items-center pt-[250px] text-[#dcdcdc]">
              {sideLeft.map(([n, g]) => <IconButton key={n} label={n} className="grid h-[37px] place-items-center">{g}</IconButton>)}
            </nav>
            <Patcher />
            <nav className="flex w-[34px] shrink-0 flex-col items-center pt-[246px] text-[#e2e2e2]">
              {sideRight.map(([n, g], i) => g ? <IconButton key={n} label={n} className="grid h-[46px] place-items-center">{g}</IconButton> : <div key={i} className="h-[34px]" />)}
              <div className="flex-1" />
              <svg width="18" height="109" className="mb-[3px]" aria-hidden="true">
                <path d="M3.500 0v26M14.500 0v26" stroke="#5a5a5a" strokeWidth="7" />
                <path d="M3.500 29v80M14.500 29v80" stroke="#5a5a5a" strokeWidth="7" strokeDasharray="3 1" />
                <circle cx="9" cy="27" r="5" fill="#e8e8e8" />
              </svg>
            </nav>
          </div>
          <footer className="flex h-[26px] shrink-0 items-center pt-2 text-[#dcdcdc]">
            <IconButton label="lock" className="w-[34px] pl-2"><Lock size={17} strokeWidth={3} /></IconButton>
            <IconButton label="select" className="ml-1.5 text-[#5c5c5c]"><svg width="16" height="16" {...ico}><path d="M7 15H1V1h14v6" /><path d="M7 5l8 7h-4l-2 4z" fill="currentColor" stroke="none" /></svg></IconButton>
            <IconButton label="presentation" className="ml-[30px]"><svg width="17" height="16" fill="currentColor"><path d="M0 0h17v11H0z" /><path d="M8 11l-5 5M9 11l5 5" stroke="currentColor" strokeWidth="2.5" /></svg></IconButton>
            <IconButton label="new view" className="ml-[29px]"><svg width="17" height="14" fill="currentColor"><path d="M0 0h11v9H0z" /><path d="M5 5h11v9H5z" stroke="#333" strokeWidth="1.5" /></svg></IconButton>
            <IconButton label="patch cords" className="ml-[30px] text-[#5c5c5c]"><svg width="16" height="15" fill="currentColor"><path d="M0 4h6v7H0zM10 4h6v7h-6zM4 0l10 15" stroke="#333" /><path d="M4 0l10 15" stroke="currentColor" /></svg></IconButton>
            <IconButton label="grid" className="ml-[13px] text-[#5c5c5c]"><svg width="16" height="16" {...ico}><path d="M4 0v16M8 0v16M12 0v16M0 4h16M0 8h16M0 12h16" strokeWidth="1" /></svg></IconButton>
            <IconButton label="add clip" className="ml-[46px] text-[#5c5c5c]"><Paperclip size={16} /></IconButton>
            <IconButton label="tools" className="ml-[30px]"><Wrench size={16} fill="#dcdcdc" /></IconButton>
            <IconButton label="keyboard" className="ml-[30px]"><svg width="17" height="16"><path d="M0 0h17v16H0z" fill="#dcdcdc" /><path d="M5.500 0v16M11.500 0v16" stroke="#333" strokeWidth="1" /><path d="M5.500 0v10M11.500 0v10" stroke="#333" strokeWidth="3.5" /></svg></IconButton>
            <IconButton label="keys" className="ml-[30px]"><svg width="17" height="16" stroke="#dcdcdc"><path d="M0 1.500h17M1 5.500h16M0 9.500h17" strokeWidth="2.5" strokeDasharray="3 1.5" /><path d="M2 14h12" strokeWidth="2.5" /></svg></IconButton>
            <div className="flex-1" />
            <IconButton label="play" className="mr-8"><svg width="22" height="22" viewBox="0 0 22 22"><circle cx="11" cy="11" r="9" fill="none" stroke="#6a6a6a" strokeWidth="3" strokeDasharray="12 2.1" /><path d="M8 6l7 5-7 5z" fill="#f4f4f4" /></svg></IconButton>
            <IconButton label="audio" className="mr-2"><Power size={17} strokeWidth={3} /></IconButton>
          </footer>
        </div>
        <aside className="flex w-[299px] shrink-0 flex-col border-l-[3px] border-[#464646]">
          <div className="flex h-[34px] shrink-0 items-center pr-0.5 pl-2">
            <h2 className="flex-1 font-['Lato',sans-serif] text-[13px] font-bold text-[#e8e8e8]">Inspector</h2>
            <IconButton label="parent" className="mr-3"><svg width="16" height="16"><path d="M8 0L16 8L8 16L0 8z" fill="#e8e8e8" /><path d="M6.500 12V5h2.500a1.800 1.800 0 0 1 0 3.800H7" stroke="#333" strokeWidth="1.5" fill="none" /></svg></IconButton>
            <label className="flex h-[18px] w-[126px] items-center gap-1 rounded-full bg-[#5a5a5a] pl-1 text-[#ddd]">
              <Search size={13} strokeWidth={2.5} className="shrink-0" />
              <input placeholder="Filter" aria-label="Filter" className="w-full min-w-0 bg-transparent font-['Lato',sans-serif] text-xs outline-none placeholder:text-[#999]" />
            </label>
            <IconButton label="close inspector" className="ml-3"><svg width="16" height="16"><circle cx="8" cy="8" r="8" fill="#ececec" /><path d="M5 5l6 6M11 5l-6 6" stroke="#333" strokeWidth="2" /></svg></IconButton>
          </div>
          <div className="flex-1 bg-[#464646]" />
          <div className="flex h-[26px] items-center pt-2 pl-[9px] text-[#5f5f5f]">
            <Settings size={17} strokeWidth={3} /><AtSign size={16} className="ml-[34px]" />
            <svg width="17" height="14" className="ml-[17px]" {...ico}><path d="M1 0v6M16 8v6M2 3h14M1 11h14M6 0L3 3l3 3M11 8l3 3-3 3" /></svg>
            <Snowflake size={16} className="ml-[33px]" /><Plus size={16} strokeWidth={4} className="ml-[34px]" />
            <Menu size={17} strokeWidth={3} className="ml-[33px]" /><ArrowLeft size={16} strokeWidth={4} className="ml-[17px]" />
          </div>
        </aside>
      </div>
    </section>
  );
}

/* ---------- taskbar ---------- */
const S = ({ children, s = 24 }) => <svg width={s} height={s} viewBox="0 0 24 24" aria-hidden="true">{children}</svg>;
const apps = [
  ["Cortana", <S><circle cx="12" cy="12" r="7" fill="none" stroke="#fff" strokeWidth="2" /></S>],
  ["Task view", <S><path d="M5 4v3h9V4M5 20v-3h9v3M5 9h9v6H5zM18 4v5M18 15v5" fill="none" stroke="#fff" strokeWidth="1.5" /><path d="M17 10h3v3h-3z" fill="#fff" /></S>],
  ["File Explorer", <S><path d="M1 3h8l2 2h12v16H1z" fill="#e9a93a" /><path d="M1 8h22v12H1z" fill="#fbd667" /><path d="M5 22v-8h14v8h-4v-4H9v4z" fill="#3c93d8" /></S>, 1],
  ["Firefox", <S><circle cx="12" cy="13" r="10.5" fill="#ff7a29" /><path d="M10 3Q14 1 16 0q1 4 4 6 5 7 0 13-6 5-12 2Q20 18 15 8z" fill="#ffd43c" /><circle cx="12" cy="13" r="5.5" fill="#7b45d6" /><path d="M3 7q5-2 6 2l4 1-4 4q-3 1-4-2z" fill="#ff4f3a" /></S>, 1],
  ["Settings", <Settings size={21} color="#fff" strokeWidth={2.5} />, 1],
  ["Notepad", <S><path d="M8 2h15l-6 19H1z" fill="#75b7bd" /><path d="M8 2h15l-2 5H6z" fill="#d5eff0" /><path d="M1 21h16l-1 2H2z" fill="#e9e9e9" /></S>, 1],
  ["VLC", <S><path d="M11 1h3l6 17H5z" fill="#f28a1b" /><path d="M9.500 7h6l1.500 4.500H8zM7 14.500h11l1 3H6z" fill="#fff" /><path d="M3 18h18l1 5H2z" fill="#f07f12" /></S>],
  ["Eye", <S><path d="M1 13Q12 2 23 13 12 22 1 13z" fill="none" stroke="#000" strokeWidth="2" /><circle cx="12" cy="13" r="4" fill="#000" /><path d="M4 4l17 16" stroke="#e01919" strokeWidth="2" /></S>],
  ["Bird", <S><path d="M9 2l3-1 2 2-1 6 10-3q-1 6-8 7l1 4-7 6 1-6Q2 14 1 8l8 3z" fill="#5a63e0" /></S>],
  ["Disc", <S><circle cx="17" cy="12" r="7" fill="#111" stroke="#444" /><path d="M1 1h14v23L1 21z" fill="#ee1c25" /><circle cx="9" cy="12" r="5" fill="none" stroke="#fff" strokeWidth="1.5" /><circle cx="9" cy="12" r="2" fill="#fff" /></S>],
  ["Services", <S><g fill="none" stroke="#cfe3ee"><circle cx="9" cy="10" r="6" strokeWidth="4" strokeDasharray="3.2 1.5" /><circle cx="9" cy="10" r="5" strokeWidth="3" stroke="#8db9d2" /><circle cx="19" cy="19" r="3" strokeWidth="3" strokeDasharray="2 1" /></g></S>],
  ["Paint", <S><path d="M11 4Q0 5 1 14q1 9 9 9 5-1 4-4t4-3q4-1 3-6-3-6-10-6z" fill="#d5e7ee" /><circle cx="6" cy="11" r="2" fill="#e0483e" /><circle cx="11" cy="8" r="2" fill="#56ad4d" /><circle cx="6" cy="17" r="2" fill="#3d7fd0" /><path d="M21 1l2 1-8 17-3 2 1-4z" fill="#c98b4b" /></S>],
  ["Discord", <span className="relative grid h-6 w-6 place-items-center rounded-full bg-[#5662e8] text-white"><FaDiscord size={16} /><span className="absolute -right-1 -bottom-1 rounded-full bg-[#e5484d] px-0.5 text-[9px] leading-[13px]">9+</span></span>, 1],
  ["Audacity", <S><path d="M3 17V11a9 9 0 0 1 18 0v6" fill="none" stroke="#0b1fd0" strokeWidth="2.5" /><path d="M1 12h5v9H2zM18 12h5l-1 9h-4z" fill="#0b1fd0" /><path d="M8 20l1-9 2 3 1-7 2 7 2-2 1 8q-4 3-9 0z" fill="#f58b1e" /><path d="M8 15h9v3H8z" fill="#d52c1d" /></S>],
  ["GIMP", <S><path d="M2 7l4 3q5 0 10-6l3 6q2 7-4 9-8 2-11-5z" fill="#7d7568" /><circle cx="9" cy="10" r="2.5" fill="#fff" /><circle cx="14" cy="10" r="2.5" fill="#fff" /><path d="M14 16l9 6" stroke="#b0b0b0" strokeWidth="2" /></S>],
  ["Blender", <S><path d="M1 18l9-7H3V9h10L9 5l2-2 10 8q4 5 0 9-6 5-12 1-3-3-2-6l-4 4z" fill="#f08a1d" /><circle cx="15" cy="15" r="4.5" fill="#fff" /><circle cx="15" cy="15" r="2.8" fill="#26578f" /></S>],
  ["Document", <S><path d="M4 1h11l5 5v17H4z" fill="#f6f6f6" /><path d="M15 1v5h5" fill="#cfcfcf" /></S>],
  ["Monitor", <S><path d="M6 1h17v15H6z" fill="#ccd3d7" /><path d="M8 3h13v11H8z" fill="#f3fafd" /><path d="M1 5h6v14H1zM9 18h10l1 3H8z" fill="#aeb6ba" /><path d="M9 11l3-3 2 4 2-6 2 4h3" fill="none" stroke="#2f86c5" /></S>],
  ["Steam", <span className="grid h-6 w-6 place-items-center rounded-full bg-linear-to-b from-[#12275e] to-[#1b86c4] text-white"><FaSteam size={22} /></span>],
  ["VS Code", <S><path d="M17 0l6 3v18l-6 3L7 14l-4 4-2-2V8l2-2 4 4zM17 7l-6 5 6 5z" fill="#2a93dc" fillRule="evenodd" /><path d="M17 0l6 3v18l-6 3z" fill="#41b0f2" /></S>, 1],
  ["Windows", <S s={20}><path d="M6 6h16v12H6zM3 16V4h16M9 9h10v6H9z" fill="none" stroke="#ddd" strokeWidth="1.5" /></S>],
  ["Live", <span className="grid h-[22px] w-[22px] place-items-center bg-[#3a3547] font-['Open_Sans',sans-serif] text-[10px] text-[#ddd]">Live</span>],
  ["Control Panel", <S><path d="M1 4h22v15H1z" fill="#48aee6" /><path d="M3 6h18v11H3z" fill="#9ad9f7" /><circle cx="8" cy="11" r="4" fill="#f2b233" /><path d="M14 8h6M14 11h6M14 14h6" stroke="#fff" strokeWidth="2" /></S>],
  ["Max", <MaxLogo s={22} />, 2],
  ["Git", <S><path d="M12 0l5 5-5 5-5-5z" fill="#ef5350" /><path d="M5 7l5 5-5 5-5-5z" fill="#5c9bf0" /><path d="M19 7l5 5-5 5-5-5z" fill="#7cc04b" /><path d="M12 14l5 5-5 5-5-5z" fill="#f5cf4a" /><path d="M10 4v12M10 8l5 4" stroke="#333" strokeWidth="1.5" fill="none" /></S>],
  ["Signal", <S><circle cx="12" cy="12" r="10.5" fill="none" stroke="#3a76f0" strokeWidth="1.5" strokeDasharray="3 1" /><path d="M12 4a8 8 0 1 1-4 15l-4 1 1-4A8 8 0 0 1 12 4z" fill="#fff" stroke="#3a76f0" /></S>],
  ["Resilio", <S><circle cx="12" cy="12" r="11" fill="#17120c" stroke="#d8a35c" /><circle cx="12" cy="12" r="7" fill="none" stroke="#f4941e" strokeWidth="2.5" strokeDasharray="10 3" /><circle cx="12" cy="12" r="3" fill="none" stroke="#f4941e" strokeWidth="1.5" /></S>],
];

function Festive() {
  return (
    <svg width="75" height="38" viewBox="0 0 75 38" aria-hidden="true">
      <ellipse cx="40" cy="38" rx="38" ry="6" fill="#b06ab8" />
      <path d="M8 20h11v15H8z" fill="#f3dfb8" /><path d="M14 9q-4 7-1 10 5 0 1-10z" fill="#f79a1c" />
      <path d="M23 5h24v30H23z" fill="none" stroke="#ef3fc3" strokeWidth="6" strokeDasharray="4 1" />
      <path d="M24 6h22v28H24z" fill="#8a4a22" /><path d="M27 9h16v22H27z" fill="#f5a46a" /><path d="M27 9h16v10H27z" fill="#6cc3da" />
      <circle cx="35" cy="18" r="4" fill="#14253d" /><path d="M28 31q0-9 7-9t7 9z" fill="#14253d" />
      <circle cx="56" cy="26" r="7.5" fill="#e02a3c" /><path d="M56 19q-1-4-4-4 0 4 4 4z" fill="#49a83a" />
      <circle cx="66" cy="32" r="5" fill="#f5a81c" /><circle cx="8" cy="32" r="5.5" fill="#f5a81c" />
      <path d="M46 0l28 4" stroke="#888" /><path d="M50 2l7 1-1 8-7-1z" fill="#3fd0c4" /><path d="M58 3l7 1-1 8-7-1z" fill="#8b5fd8" /><path d="M66 4l7 1-1 8-7-1z" fill="#f7bb2a" />
    </svg>
  );
}

function Taskbar() {
  return (
    <footer className="flex h-10 shrink-0 items-stretch bg-[#1e1f1f] font-['Open_Sans',sans-serif] text-xs text-white">
      <button aria-label="Start" className="grid w-12 shrink-0 place-items-center">
        <svg width="16" height="16" fill="#fff"><path d="M0 2.500L6.500 1.500V7.500H0zM7.500 1.300L16 0v7.500H7.500zM0 8.500h6.500v6L0 13.500zM7.500 8.500H16V16L7.500 14.700z" /></svg>
      </button>
      <label className="flex w-[344px] shrink-0 items-center border border-b-0 border-[#6d6d6d] bg-[#333536] pl-[11px]">
        <Search size={17} className="-scale-x-100" strokeWidth={1.5} />
        <input placeholder="Type here to search" aria-label="Search" className="ml-3 min-w-0 flex-1 bg-transparent text-sm outline-none placeholder:text-[#dcdcdc]" />
        <Festive />
      </label>
      <div className="flex shrink-0">
        {apps.map(([n, g, on]) => (
          <button key={n} aria-label={n} className={on === 2 ? "grid w-12 place-items-center border-b-2 border-[#b8b8b8] bg-[#4a4c4c]" : "grid w-12 place-items-center"}>
            <span className={on === 1 ? "grid h-full w-[39px] place-items-center border-b-2 border-[#b8b8b8]" : "grid h-full w-[39px] place-items-center"}>{g}</span>
          </button>
        ))}
      </div>
      <div className="flex-1" />
      <button aria-label="Hidden icons" className="mr-2 shrink-0"><ChevronUp size={16} /></button>
      <button aria-label="Volume" className="mr-2 shrink-0"><Volume2 size={17} strokeWidth={1.5} /></button>
      <button aria-label="Network" className="mr-2 shrink-0"><svg width="17" height="16" fill="none" stroke="#fff"><path d="M4 3.500h12v8H4zM8 14.500h5M10.500 12v2M.5 1.500h4v4h-4zM2.500 6v7h2" /></svg></button>
      <button className="mr-2 shrink-0">ENG</button>
      <button className="mr-4 shrink-0 text-center leading-[17px]"><time>20:58<br />01/11/2022</time></button>
      <button aria-label="Notifications" className="mr-[25px] shrink-0"><svg width="16" height="16"><path d="M0 1h16v11h-5l-3 3v-3H0z" fill="#fff" /><path d="M3 4h10M3 6.500h10M3 9h7" stroke="#1e1f1f" /></svg></button>
    </footer>
  );
}

export default function App() {
  return (
    <div className="h-screen bg-black font-['Liberation_Sans',Arial,sans-serif]">
      <div className="flex h-full w-1/2 flex-col">
        <div className="flex min-h-0 flex-1">
          <div className="flex w-2 shrink-0 flex-col bg-[#2d2d2d]">
            <div className="h-[30px]" />
            <div className="h-12 w-0.5 bg-white" />
            <div className="flex-1" />
            <div className="h-[22px] w-[7px] bg-[#0a7ac8]" />
          </div>
          <MaxWindow />
        </div>
        <Taskbar />
      </div>
    </div>
  );
}
